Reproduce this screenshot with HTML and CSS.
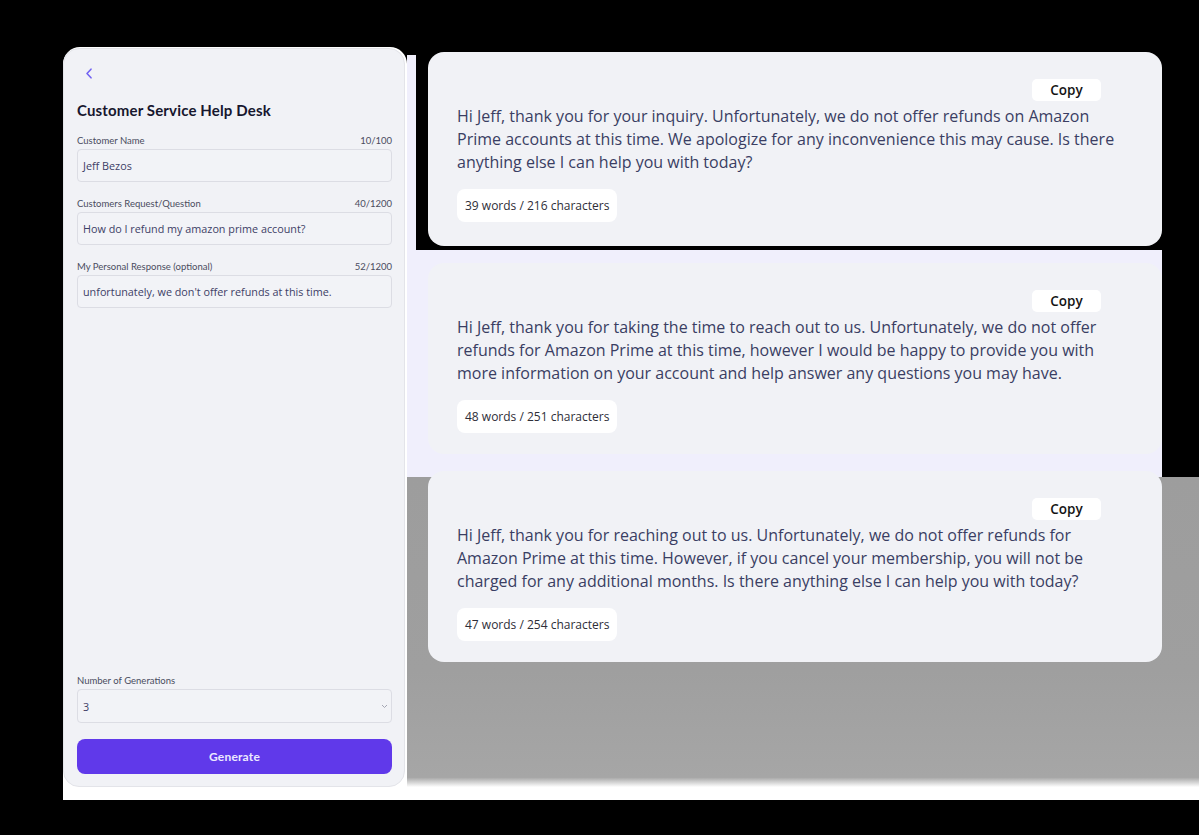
FILE: index.html
```html
<!DOCTYPE html>
<html>
<head>
<meta charset="utf-8">
<link rel="stylesheet" href="styles.css">
</head>
<body>
<div class="stage">
  <div class="panel-wrap">
    <div class="panel">
      <div class="back">
        <svg width="8" height="11" viewBox="0 0 8 11"><path d="M6 1.2 L2 5.5 L6 9.8" fill="none" stroke="#7263f2" stroke-width="1.6" stroke-linecap="round" stroke-linejoin="round"/></svg>
      </div>
      <h1 class="title">Customer Service Help Desk</h1>

      <div class="field">
        <div class="label-row"><span>Customer Name</span><span>10/100</span></div>
        <div class="input">Jeff Bezos</div>
      </div>
      <div class="field">
        <div class="label-row"><span>Customers Request/Question</span><span>40/1200</span></div>
        <div class="input">How do I refund my amazon prime account?</div>
      </div>
      <div class="field">
        <div class="label-row"><span>My Personal Response (optional)</span><span>52/1200</span></div>
        <div class="input">unfortunately, we don't offer refunds at this time.</div>
      </div>

      <div class="spacer"></div>

      <div class="field">
        <div class="label-row"><span>Number of Generations</span></div>
        <div class="input select"><span>3</span>
          <svg width="7" height="5" viewBox="0 0 7 5"><path d="M1 1 L3.5 3.5 L6 1" fill="none" stroke="#a4a6b3" stroke-width="1"/></svg>
        </div>
      </div>
      <button class="generate">Generate</button>
    </div>
  </div>

  <div class="results">
    <div class="card">
      <div class="card-top"><span class="copy">Copy</span></div>
      <p class="reply">Hi Jeff, thank you for your inquiry. Unfortunately, we do not offer refunds on Amazon Prime accounts at this time. We apologize for any inconvenience this may cause. Is there anything else I can help you with today?</p>
      <span class="count">39 words / 216 characters</span>
    </div>
    <div class="card">
      <div class="card-top"><span class="copy">Copy</span></div>
      <p class="reply">Hi Jeff, thank you for taking the time to reach out to us. Unfortunately, we do not offer refunds for Amazon Prime at this time, however I would be happy to provide you with more information on your account and help answer any questions you may have.</p>
      <span class="count">48 words / 251 characters</span>
    </div>
    <div class="card">
      <div class="card-top"><span class="copy">Copy</span></div>
      <p class="reply">Hi Jeff, thank you for reaching out to us. Unfortunately, we do not offer refunds for Amazon Prime at this time. However, if you cancel your membership, you will not be charged for any additional months. Is there anything else I can help you with today?</p>
      <span class="count">47 words / 254 characters</span>
    </div>
  </div>
</div>
</body>
</html>
```
FILE: styles.css
```css
* { box-sizing: border-box; }

html, body {
  margin: 0;
  background: #000;
  width: 1199px;
  height: 835px;
  overflow: hidden;
}

.stage {
  margin: 47px 0 0 63px;
  width: 1136px;
  height: 753px;
  display: flex;
}

.panel-wrap {
  width: 344px;
  flex: none;
  background: #fff;
  border-top-left-radius: 17px;
  border-top-right-radius: 17px;
  padding: 1px 2px 13px 0;
}

.panel {
  height: 739px;
  background: #f1f2f6;
  border: 1px solid #e3e4e9;
  border-radius: 16px;
  padding: 17px 12px 12px 13px;
  display: flex;
  flex-direction: column;
  font-family: Lato, "Open Sans", sans-serif;
}

.back {
  height: 14px;
  padding-left: 8px;
  display: flex;
  align-items: center;
}

.title {
  margin: 21px 0 0;
  font-size: 15px;
  line-height: 19px;
  font-weight: 700;
  letter-spacing: 0.15px;
  color: #17172e;
}

.field { margin-top: 15px; }

.label-row {
  display: flex;
  justify-content: space-between;
  font-size: 9.5px;
  line-height: 12px;
  color: #4a4c5e;
  margin-bottom: 2px;
}

.input {
  height: 33px;
  border: 1px solid #dcdde4;
  border-radius: 4px;
  background: #f2f3f7;
  padding: 0 5px;
  display: flex;
  align-items: center;
  font-family: "Open Sans", sans-serif;
  font-size: 10.8px;
  color: #3d4066;
}

.field + .field { margin-top: 16px; }

.select {
  height: 34px;
  justify-content: space-between;
  padding-right: 3px;
}

.spacer { flex: 1; }

.generate {
  margin-top: 16px;
  height: 35px;
  border: none;
  border-radius: 8px;
  background: #6039ea;
  color: #ece9ff;
  font-family: Lato, sans-serif;
  font-weight: 700;
  font-size: 12px;
  letter-spacing: 0.2px;
}

.results {
  width: 792px;
  flex: none;
  padding: 5px 0 0 21px;
  display: flex;
  flex-direction: column;
  gap: 17px;
  background:
    linear-gradient(#f0effc, #f0effc) 0 8px / 9px 200px no-repeat,
    linear-gradient(#f0effc, #f0effc) 0 203px / 755px 227px no-repeat,
    linear-gradient(#9d9d9d, #9f9f9f 60%, #a6a6a6 93%, #fff 96%) 0 430px / 792px 323px no-repeat;
}

.card {
  width: 734px;
  background: #f1f2f6;
  border-radius: 16px;
  padding: 27px 29px 21px 29px;
  display: flex;
  flex-direction: column;
  align-items: flex-start;
  font-family: "Open Sans", sans-serif;
}

.card:first-child { padding-bottom: 24px; }

.card-top {
  width: 100%;
  display: flex;
  justify-content: flex-end;
  padding-right: 32px;
}

.copy {
  width: 69px;
  height: 22px;
  background: #fff;
  border-radius: 5px;
  display: flex;
  align-items: center;
  justify-content: center;
  font-size: 13.5px;
  font-weight: 600;
  color: #141414;
}

.reply {
  margin: 4px 0 0;
  font-size: 16px;
  line-height: 23px;
  color: #3a3e63;
}

.count {
  margin-top: 15px;
  height: 33px;
  padding: 0 8px;
  background: #fff;
  border-radius: 8px;
  display: flex;
  align-items: center;
  font-size: 12px;
  color: #2e2e38;
}
```
